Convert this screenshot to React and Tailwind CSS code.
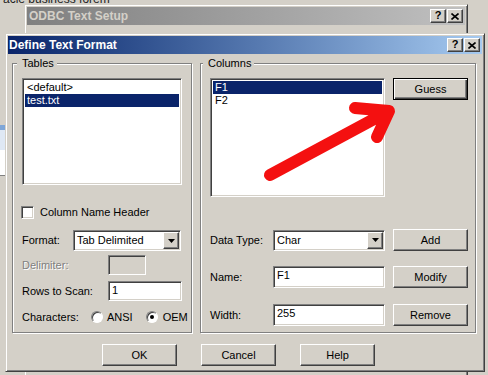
import React from 'react';

const raised = 'border border-t-white border-l-white border-r-[#404040] border-b-[#404040] shadow-[inset_-1px_-1px_0_#808080] bg-[#d4d0c8]';
const sunken = 'border border-t-[#808080] border-l-[#808080] border-r-white border-b-white shadow-[inset_1px_1px_0_#404040,inset_-1px_-1px_0_#d4d0c8]';
const frame = 'border border-t-[#d4d0c8] border-l-[#d4d0c8] border-r-[#404040] border-b-[#404040] shadow-[inset_1px_1px_0_#fff,inset_-1px_-1px_0_#808080] bg-[#d4d0c8] p-[2px]';

const Button = ({ children, def }) => (
  <div
    className={`w-[75px] h-[22px] shrink-0 flex items-center justify-center ${
      def
        ? 'border border-black bg-[#d4d0c8] shadow-[inset_1px_1px_0_#fff,inset_-1px_-1px_0_#404040,inset_-2px_-2px_0_#808080]'
        : raised
    }`}
  >
    {children}
  </div>
);

const TitleBtn = ({ close }) => (
  <div className={`w-[16px] h-[14px] flex items-center justify-center ${raised}`}>
    {close ? (
      <svg width="8" height="7" viewBox="0 0 8 7">
        <path d="M0.5 0.5 L7.5 6.5 M7.5 0.5 L0.5 6.5" stroke="#000" strokeWidth="1.6" />
      </svg>
    ) : (
      <span className="font-bold text-[11px] leading-[11px] mt-[-1px]">?</span>
    )}
  </div>
);

const DropBtn = () => (
  <div className={`w-[16px] h-[17px] flex items-center justify-center ${raised}`}>
    <svg width="7" height="4" viewBox="0 0 7 4">
      <path d="M0 0 H7 L3.5 4 Z" fill="#000" />
    </svg>
  </div>
);

const Select = ({ value, w }) => (
  <div className={`${w} h-[21px] bg-white p-[1px] flex items-center justify-between ${sunken}`}>
    <span className="pl-[2px]">{value}</span>
    <DropBtn />
  </div>
);

const Field = ({ value, w, h, disabled }) => (
  <div className={`${w} ${h} ${disabled ? 'bg-[#d4d0c8]' : 'bg-white'} pl-[3px] pt-[2px] ${sunken}`}>
    {value}
  </div>
);

const Radio = ({ checked }) => (
  <div className="w-[12px] h-[12px] rounded-full border border-t-[#808080] border-l-[#808080] border-r-white border-b-white shadow-[inset_1px_1px_0_#404040] bg-white flex items-center justify-center">
    {checked && <div className="w-[4px] h-[4px] rounded-full bg-black" />}
  </div>
);

const Group = ({ label, className, legendClass, bodyClass, children }) => (
  <fieldset className={`border border-[#808080] shadow-[inset_1px_1px_0_#fff,1px_1px_0_#fff] ${className}`}>
    <legend className={`bg-[#d4d0c8] leading-[13px] pr-[3px] pl-[5px] ${legendClass}`}>{label}</legend>
    <div className={bodyClass}>{children}</div>
  </fieldset>
);

export default function App() {
  return (
    <div className="relative w-[488px] h-[375px] overflow-hidden bg-[#d4d0c8] text-[11px] leading-[13px] text-black font-['Liberation_Sans',Arial,sans-serif]">
      {/* desktop behind */}
      <div className="absolute left-[3px] top-[-7px] text-[12px] text-[#222]">acle business forem</div>
      <div className="absolute left-0 top-[125px] w-[5px] h-[5px] bg-[#7ea6d8]" />
      <div className="absolute left-0 top-[130px] w-[5px] h-[20px] bg-[#dfe8f4]" />
      <div className="absolute left-0 top-[150px] w-[5px] h-[26px] bg-white border-b border-[#808080]" />

      {/* ODBC Text Setup window behind */}
      <div className={`absolute left-[24px] top-[4px] w-[444px] h-[420px] ${frame}`}>
        <div className="h-[18px] flex items-center justify-between pl-[2px] pr-[2px] bg-linear-to-r from-[#808080] to-[#c0c0c0]">
          <span className="font-bold text-[12px] text-[#d4d0c8]">ODBC Text Setup</span>
          <div className="flex gap-[1px]">
            <TitleBtn />
            <TitleBtn close />
          </div>
        </div>
      </div>

      {/* Define Text Format dialog */}
      <div className={`absolute left-[5px] top-[33px] w-[480px] h-[339px] flex flex-col ${frame}`}>
        <div className="h-[18px] shrink-0 flex items-center justify-between pl-[1px] pr-[2px] bg-linear-to-r from-[#0a246a] to-[#a6caf0]">
          <span className="font-bold text-[12px] text-white">Define Text Format</span>
          <div className="flex gap-[1px]">
            <TitleBtn />
            <TitleBtn close />
          </div>
        </div>

        <div className="flex mt-[3px] pl-[4px] gap-[8px]">
          <Group label="Tables" className="w-[180px] h-[276px]" legendClass="ml-[4px]" bodyClass="pl-[8px]">
            <div className={`mt-[8px] ml-[1px] w-[160px] h-[107px] bg-white p-[2px] ${sunken}`}>
              <div className="pl-[2px]">&lt;default&gt;</div>
              <div className="pl-[2px] bg-[#0a246a] text-white">test.txt</div>
            </div>
            <div className="mt-[21px] flex items-center gap-[6px] h-[13px]">
              <div className={`w-[13px] h-[13px] bg-white ${sunken}`} />
              <span>Column Name Header</span>
            </div>
            <div className="mt-[11px] flex items-center h-[21px] pl-[1px]">
              <span className="w-[51px]">Format:</span>
              <Select value="Tab Delimited" w="w-[108px]" />
            </div>
            <div className="mt-[4px] flex items-center h-[20px] pl-[1px]">
              <span className="w-[86px] text-[#808080] [text-shadow:1px_1px_0_#fff]">Delimiter:</span>
              <Field w="w-[38px]" h="h-[20px]" disabled />
            </div>
            <div className="mt-[6px] flex items-center h-[20px] pl-[1px]">
              <span className="w-[86px]">Rows to Scan:</span>
              <Field value="1" w="w-[74px]" h="h-[20px]" />
            </div>
            <div className="mt-[9px] flex items-center h-[14px] pl-[1px]">
              <span className="w-[69px]">Characters:</span>
              <Radio />
              <span className="ml-[4px]">ANSI</span>
              <div className="ml-[13px]">
                <Radio checked />
              </div>
              <span className="ml-[5px]">OEM</span>
            </div>
          </Group>

          <Group label="Columns" className="w-[276px] h-[276px]" legendClass="ml-[2px]" bodyClass="pl-[9px]">
            <div className="mt-[8px] flex gap-[8px] items-start">
              <div className={`w-[175px] h-[119px] bg-white p-[2px] ${sunken}`}>
                <div className="pl-[2px] bg-[#0a246a] text-white">F1</div>
                <div className="pl-[2px]">F2</div>
              </div>
              <Button def>Guess</Button>
            </div>
            <div className="mt-[32px] flex items-center h-[22px]">
              <span className="w-[63px]">Data Type:</span>
              <Select value="Char" w="w-[112px]" />
              <div className="ml-[8px]">
                <Button>Add</Button>
              </div>
            </div>
            <div className="mt-[15px] flex items-center h-[22px]">
              <span className="w-[63px]">Name:</span>
              <Field value="F1" w="w-[112px]" h="h-[22px]" />
              <div className="ml-[8px]">
                <Button>Modify</Button>
              </div>
            </div>
            <div className="mt-[16px] flex items-center h-[22px]">
              <span className="w-[63px]">Width:</span>
              <Field value="255" w="w-[112px]" h="h-[22px]" />
              <div className="ml-[8px]">
                <Button>Remove</Button>
              </div>
            </div>
          </Group>
        </div>

        <div className="mt-[11px] flex pl-[94px] gap-[24px]">
          <Button>OK</Button>
          <Button>Cancel</Button>
          <Button>Help</Button>
        </div>
      </div>

      {/* red annotation arrow */}
      <svg className="absolute inset-0 pointer-events-none" width="488" height="375" viewBox="0 0 488 375">
        <path
          d="M270 175 L389 111 M355 108 L389 111 L377 137"
          fill="none"
          stroke="#f41010"
          strokeWidth="12"
          strokeLinecap="round"
          strokeLinejoin="round"
        />
      </svg>
    </div>
  );
}
